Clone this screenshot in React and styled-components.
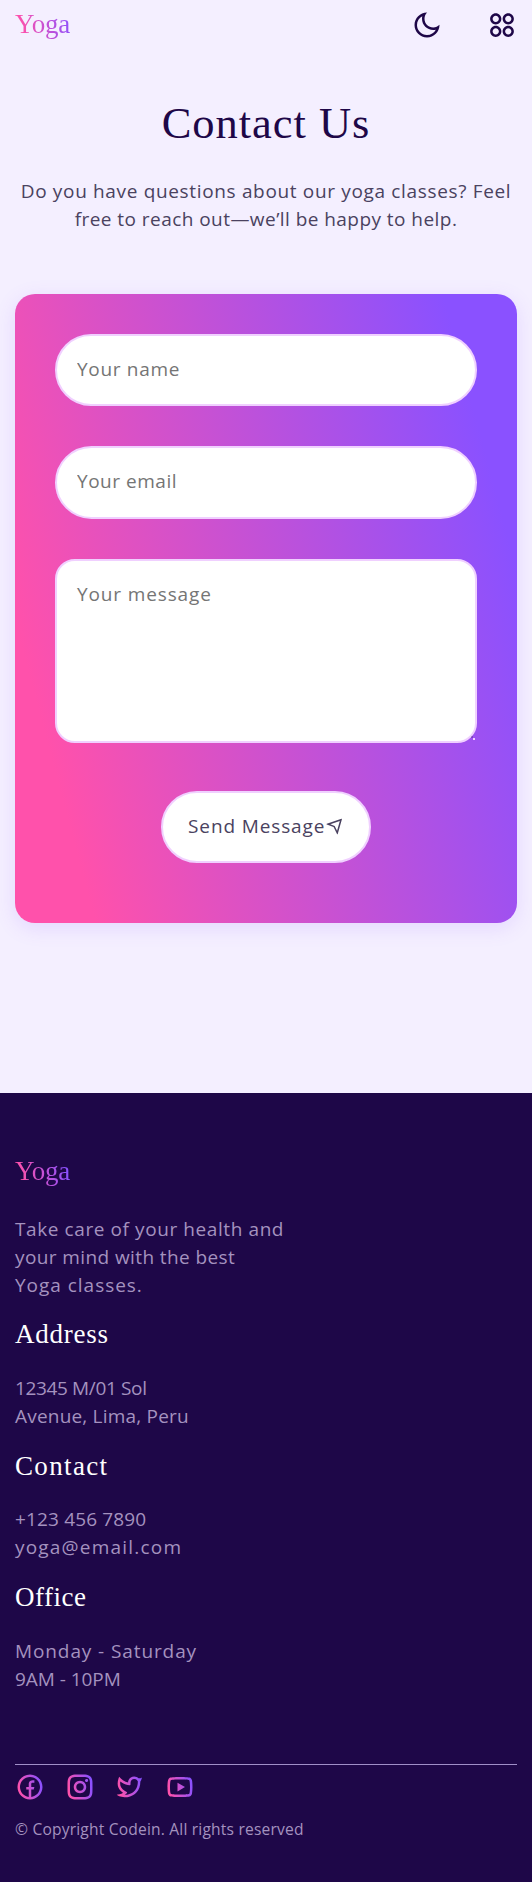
import React from "react";
import styled, { createGlobalStyle } from "styled-components";
import {
  RiMoonLine,
  RiApps2Line,
  RiNavigationLine,
  RiFacebookCircleLine,
  RiInstagramLine,
  RiTwitterLine,
  RiYoutubeLine,
} from "react-icons/ri";

const gradient = "linear-gradient(75deg, #ff51ab 12%, #8a51ff 89%)";
const serif = '"Liberation Serif", serif';
const sans = '"Open Sans", "Liberation Sans", sans-serif';

const GlobalStyle = createGlobalStyle`
  *, *::before, *::after { box-sizing: border-box; }
  body { margin: 0; background: #f4efff; font-family: ${sans}; font-size: 19px; line-height: 28.08px; color: #4a4260; }
  h1, h2, p { margin: 0; font-weight: 400; }
`;

const Line = styled.span`
  display: block;
  white-space: nowrap;
  letter-spacing: ${(p) => p.$track}px;
`;

const Header = styled.header`
  display: flex;
  align-items: center;
  height: 50px;
  padding: 0 15px;
`;

const Logo = styled.a`
  display: inline-block;
  margin-bottom: 2px;
  padding-right: ${(p) => p.$pad || 0}px;
  background: ${gradient};
  background-clip: text;
  -webkit-background-clip: text;
  color: transparent;
  font: 400 27px/36px ${serif};
  letter-spacing: -0.15px;
`;

const Tools = styled.div`
  display: flex;
  gap: 45px;
  margin-left: auto;
`;

const IconButton = styled.button`
  display: flex;
  padding: 0;
  border: 0;
  background: none;
  color: #1e0748;
  font-size: 30px;
`;

const Main = styled.main`
  padding: 43px 15px 170px;
`;

const Title = styled.h1`
  color: #1e0748;
  font: 400 44.5px/60px ${serif};
  letter-spacing: 0.97px;
  text-align: center;
`;

const Intro = styled.p`
  margin: 24px 0 60.8px;
  text-align: center;
`;

const Form = styled.form`
  display: flex;
  flex-direction: column;
  align-items: center;
  gap: 40px;
  padding: 40px 40px 60px;
  border-radius: 20px;
  background: ${gradient};
  box-shadow: 0 5px 20px rgba(138, 81, 255, 0.15);
`;

const Field = styled.input`
  display: block;
  width: 100%;
  height: 72.3px;
  padding: 19px 20px 21px;
  border: 2px solid #f0d0ff;
  border-radius: 40px;
  outline: 0;
  background: #fff;
  color: #1e0748;
  font: 400 19px/28px ${sans};
  letter-spacing: ${(p) => p.$track}px;
  &::placeholder { color: #757575; }
`;

const MessageField = styled(Field)`
  height: 184px;
  border-radius: 20px;
  resize: none;
`;

const MessageBox = styled.div`
  position: relative;
  width: 100%;
  &::after {
    content: "";
    position: absolute;
    right: 2px;
    bottom: 3px;
    width: 2px;
    height: 2px;
    background: #f0d0ff;
    box-shadow: -2px -2px 0 -0.5px #1e0748;
  }
`;

const SendButton = styled.button`
  display: flex;
  align-items: center;
  height: 72px;
  margin-top: 8px;
  padding: 0 25.5px;
  border: 2px solid #f0d0ff;
  border-radius: 40px;
  background: #fff;
  color: #4a4260;
  font: 400 19px/28px ${sans};
  letter-spacing: 0.875px;
  span { margin-top: -2px; }
  svg { font-size: 18.7px; transform: scaleX(-1); }
`;

const Footer = styled.footer`
  padding: 60px 15px 41px;
  background: #1e0748;
  color: #a492bf;
`;

const Columns = styled.div`
  display: grid;
  gap: 17.6px;
  padding-bottom: 71px;
  border-bottom: 1px solid #a08fc8;
`;

const Brand = styled.section`
  display: flex;
  flex-direction: column;
  align-items: flex-start;
  gap: 24px;
`;

const Heading = styled.h2`
  margin-bottom: 21.6px;
  color: #fff;
  font: 400 27px/36px ${serif};
  letter-spacing: ${(p) => p.$track}px;
`;

const Socials = styled.nav`
  display: flex;
  gap: 20px;
  padding: 7px 0 15px;
  svg { width: 30px; height: 30px; }
`;

const Copyright = styled.p`
  font-size: 15.6px;
  line-height: 24px;
  letter-spacing: 0.18px;
`;

const sections = [
  { title: "Address", track: 0.75, lines: [["12345 M/01 Sol", -0.36], ["Avenue, Lima, Peru", 0.2]] },
  { title: "Contact", track: 1.35, lines: [["+123 456 7890", 0.15], ["yoga@email.com", 1.2]] },
  { title: "Office", track: 0.5, lines: [["Monday - Saturday", 0.9], ["9AM - 10PM", -0.04]] },
];

const socialIcons = [RiFacebookCircleLine, RiInstagramLine, RiTwitterLine, RiYoutubeLine];

export default function App() {
  return (
    <>
      <GlobalStyle />
      <Header>
        <Logo $pad={6}>Yoga</Logo>
        <Tools>
          <IconButton type="button" aria-label="Theme"><RiMoonLine /></IconButton>
          <IconButton type="button" aria-label="Menu"><RiApps2Line /></IconButton>
        </Tools>
      </Header>
      <Main>
        <Title>Contact Us</Title>
        <Intro>
          <Line $track={0.66}>Do you have questions about our yoga classes? Feel</Line>
          <Line $track={0.449}>free to reach out—we’ll be happy to help.</Line>
        </Intro>
        <Form onSubmit={(e) => e.preventDefault()}>
          <Field placeholder="Your name" $track={0.68} />
          <Field placeholder="Your email" type="email" $track={0.52} />
          <MessageBox>
            <MessageField as="textarea" placeholder="Your message" $track={0.865} />
          </MessageBox>
          <SendButton><span>Send Message</span><RiNavigationLine /></SendButton>
        </Form>
      </Main>
      <Footer>
        <Columns>
          <Brand>
            <Logo>Yoga</Logo>
            <p>
              <Line $track={0.59}>Take care of your health and</Line>
              <Line $track={0.4}>your mind with the best</Line>
              <Line $track={0.977}>Yoga classes.</Line>
            </p>
          </Brand>
          {sections.map((s) => (
            <section key={s.title}>
              <Heading $track={s.track}>{s.title}</Heading>
              <p>
                {s.lines.map(([text, track]) => (
                  <Line key={text} $track={track}>{text}</Line>
                ))}
              </p>
            </section>
          ))}
        </Columns>
        <svg width="0" height="0" style={{ display: "block" }} aria-hidden="true">
          <defs>
            <linearGradient id="brand" gradientUnits="userSpaceOnUse" x1="0" y1="15" x2="24" y2="9">
              <stop offset="0.12" stopColor="#ff51ab" />
              <stop offset="0.89" stopColor="#8a51ff" />
            </linearGradient>
          </defs>
        </svg>
        <Socials>
          {socialIcons.map((Icon, i) => (
            <Icon key={i} fill="url(#brand)" />
          ))}
        </Socials>
        <Copyright>© Copyright Codein. All rights reserved</Copyright>
      </Footer>
    </>
  );
}
